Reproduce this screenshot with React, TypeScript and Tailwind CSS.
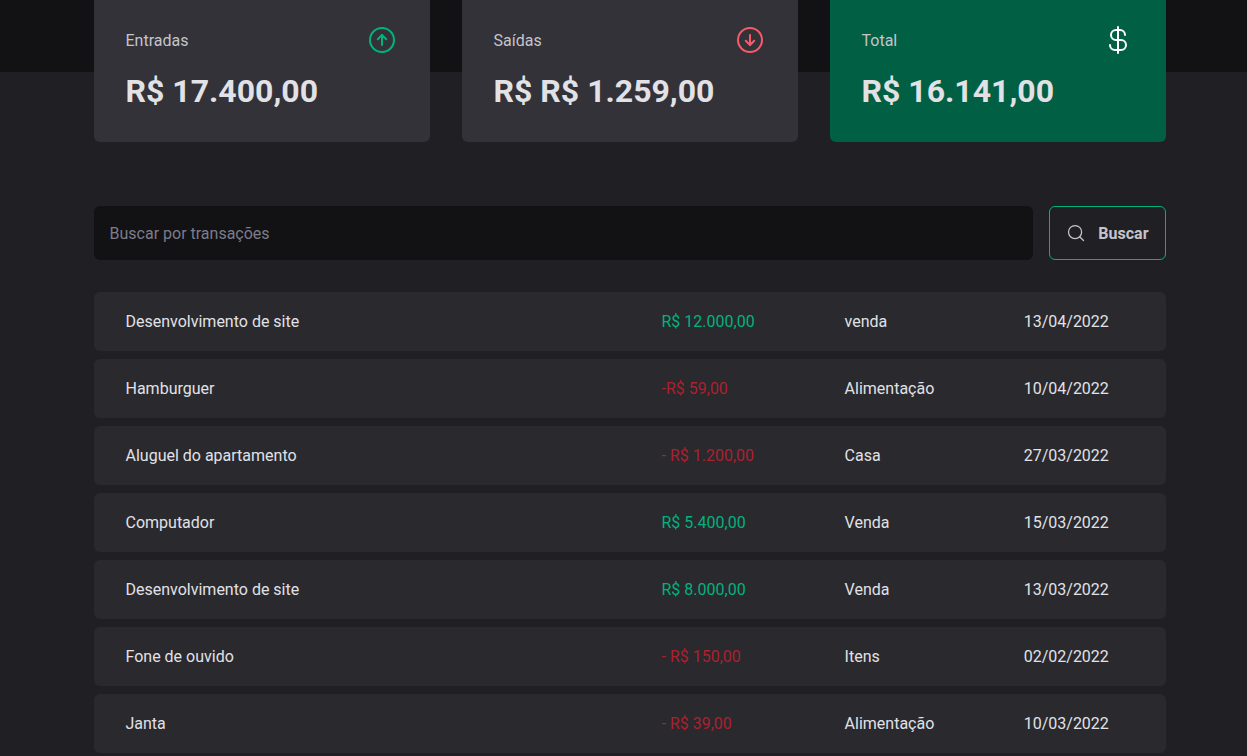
import type { ReactNode } from "react";
import { PiCurrencyDollar } from "react-icons/pi";

type Transaction = {
  description: string;
  price: string;
  income: boolean;
  category: string;
  date: string;
};

const transactions: Transaction[] = [
  { description: "Desenvolvimento de site", price: "R$ 12.000,00", income: true, category: "venda", date: "13/04/2022" },
  { description: "Hamburguer", price: "-R$ 59,00", income: false, category: "Alimentação", date: "10/04/2022" },
  { description: "Aluguel do apartamento", price: "- R$ 1.200,00", income: false, category: "Casa", date: "27/03/2022" },
  { description: "Computador", price: "R$ 5.400,00", income: true, category: "Venda", date: "15/03/2022" },
  { description: "Desenvolvimento de site", price: "R$ 8.000,00", income: true, category: "Venda", date: "13/03/2022" },
  { description: "Fone de ouvido", price: "- R$ 150,00", income: false, category: "Itens", date: "02/02/2022" },
  { description: "Janta", price: "- R$ 39,00", income: false, category: "Alimentação", date: "10/03/2022" },
];

function LineIcon({ className, children }: { className: string; children: ReactNode }) {
  return (
    <svg
      viewBox="0 0 256 256"
      fill="none"
      stroke="currentColor"
      strokeWidth="16"
      strokeLinecap="round"
      strokeLinejoin="round"
      aria-hidden="true"
      className={className}
    >
      {children}
    </svg>
  );
}

function ArrowCircleUp({ className }: { className: string }) {
  return (
    <LineIcon className={className}>
      <circle cx="128" cy="128" r="96" />
      <polyline points="94.1 121.9 128 88 161.9 121.9" />
      <line x1="128" y1="168" x2="128" y2="88" />
    </LineIcon>
  );
}

function ArrowCircleDown({ className }: { className: string }) {
  return (
    <LineIcon className={className}>
      <circle cx="128" cy="128" r="96" />
      <polyline points="94.1 134.1 128 168 161.9 134.1" />
      <line x1="128" y1="88" x2="128" y2="168" />
    </LineIcon>
  );
}

function MagnifyingGlass({ className }: { className: string }) {
  return (
    <LineIcon className={className}>
      <circle cx="116" cy="116" r="84" />
      <line x1="175.4" y1="175.4" x2="224" y2="224" />
    </LineIcon>
  );
}

type SummaryCardProps = {
  label: string;
  value: string;
  icon: ReactNode;
  highlight?: boolean;
};

function SummaryCard({ label, value, icon, highlight = false }: SummaryCardProps) {
  return (
    <article
      className={`rounded-b-md px-8 pt-6 pb-8 ${highlight ? "bg-[#015f43]" : "bg-[#323238]"}`}
    >
      <header className="flex items-center justify-between text-[#c4c4cc]">
        <span>{label}</span>
        {icon}
      </header>
      <strong className="mt-4 block text-[32px] leading-[38px] font-bold">{value}</strong>
    </article>
  );
}

function Summary() {
  return (
    <section className="grid grid-cols-3 gap-8">
      <SummaryCard
        label="Entradas"
        value="R$ 17.400,00"
        icon={<ArrowCircleUp className="size-8 text-[#00b37e]" />}
      />
      <SummaryCard
        label="Saídas"
        value="R$ R$ 1.259,00"
        icon={<ArrowCircleDown className="size-8 text-[#f75a68]" />}
      />
      <SummaryCard
        label="Total"
        value="R$ 16.141,00"
        icon={<PiCurrencyDollar className="size-8 text-white" />}
        highlight
      />
    </section>
  );
}

function SearchForm() {
  return (
    <form className="mt-16 flex gap-4" onSubmit={(event) => event.preventDefault()}>
      <input
        type="text"
        aria-label="Buscar por transações"
        placeholder="Buscar por transações"
        className="min-w-0 flex-1 rounded-md bg-[#121214] p-4 text-[#c4c4cc] placeholder:text-[#7c7c8a]"
      />
      <button
        type="submit"
        className="flex h-[54px] items-center gap-3 rounded-md border border-[#00b37e] px-4 font-bold text-[#c4c4cc]"
      >
        <MagnifyingGlass className="size-5" />
        Buscar
      </button>
    </form>
  );
}

function TransactionsTable() {
  return (
    <table
      aria-label="Transações"
      className="mt-6 w-full border-separate border-spacing-x-0 border-spacing-y-2"
    >
      <tbody>
        {transactions.map((item) => (
          <tr key={`${item.description}-${item.date}`}>
            <td className="w-1/2 rounded-l-md bg-[#29292e] px-8 py-5">{item.description}</td>
            <td
              className={`bg-[#29292e] px-8 py-5 ${item.income ? "text-[#00b37e]" : "text-[#ab222e]"}`}
            >
              {item.price}
            </td>
            <td className="bg-[#29292e] px-8 py-5">{item.category}</td>
            <td className="rounded-r-md bg-[#29292e] px-8 py-5">{item.date}</td>
          </tr>
        ))}
      </tbody>
    </table>
  );
}

export default function App() {
  return (
    <div className="min-h-screen bg-[#202024] font-['Roboto',sans-serif] text-base leading-[19px] text-[#e1e1e6] antialiased">
      <div className="h-[72px] bg-[#121214]" />
      <div className="-mt-[72px] pl-3">
        <main className="mx-auto max-w-[1120px] px-6">
          <Summary />
          <SearchForm />
          <TransactionsTable />
        </main>
      </div>
    </div>
  );
}
